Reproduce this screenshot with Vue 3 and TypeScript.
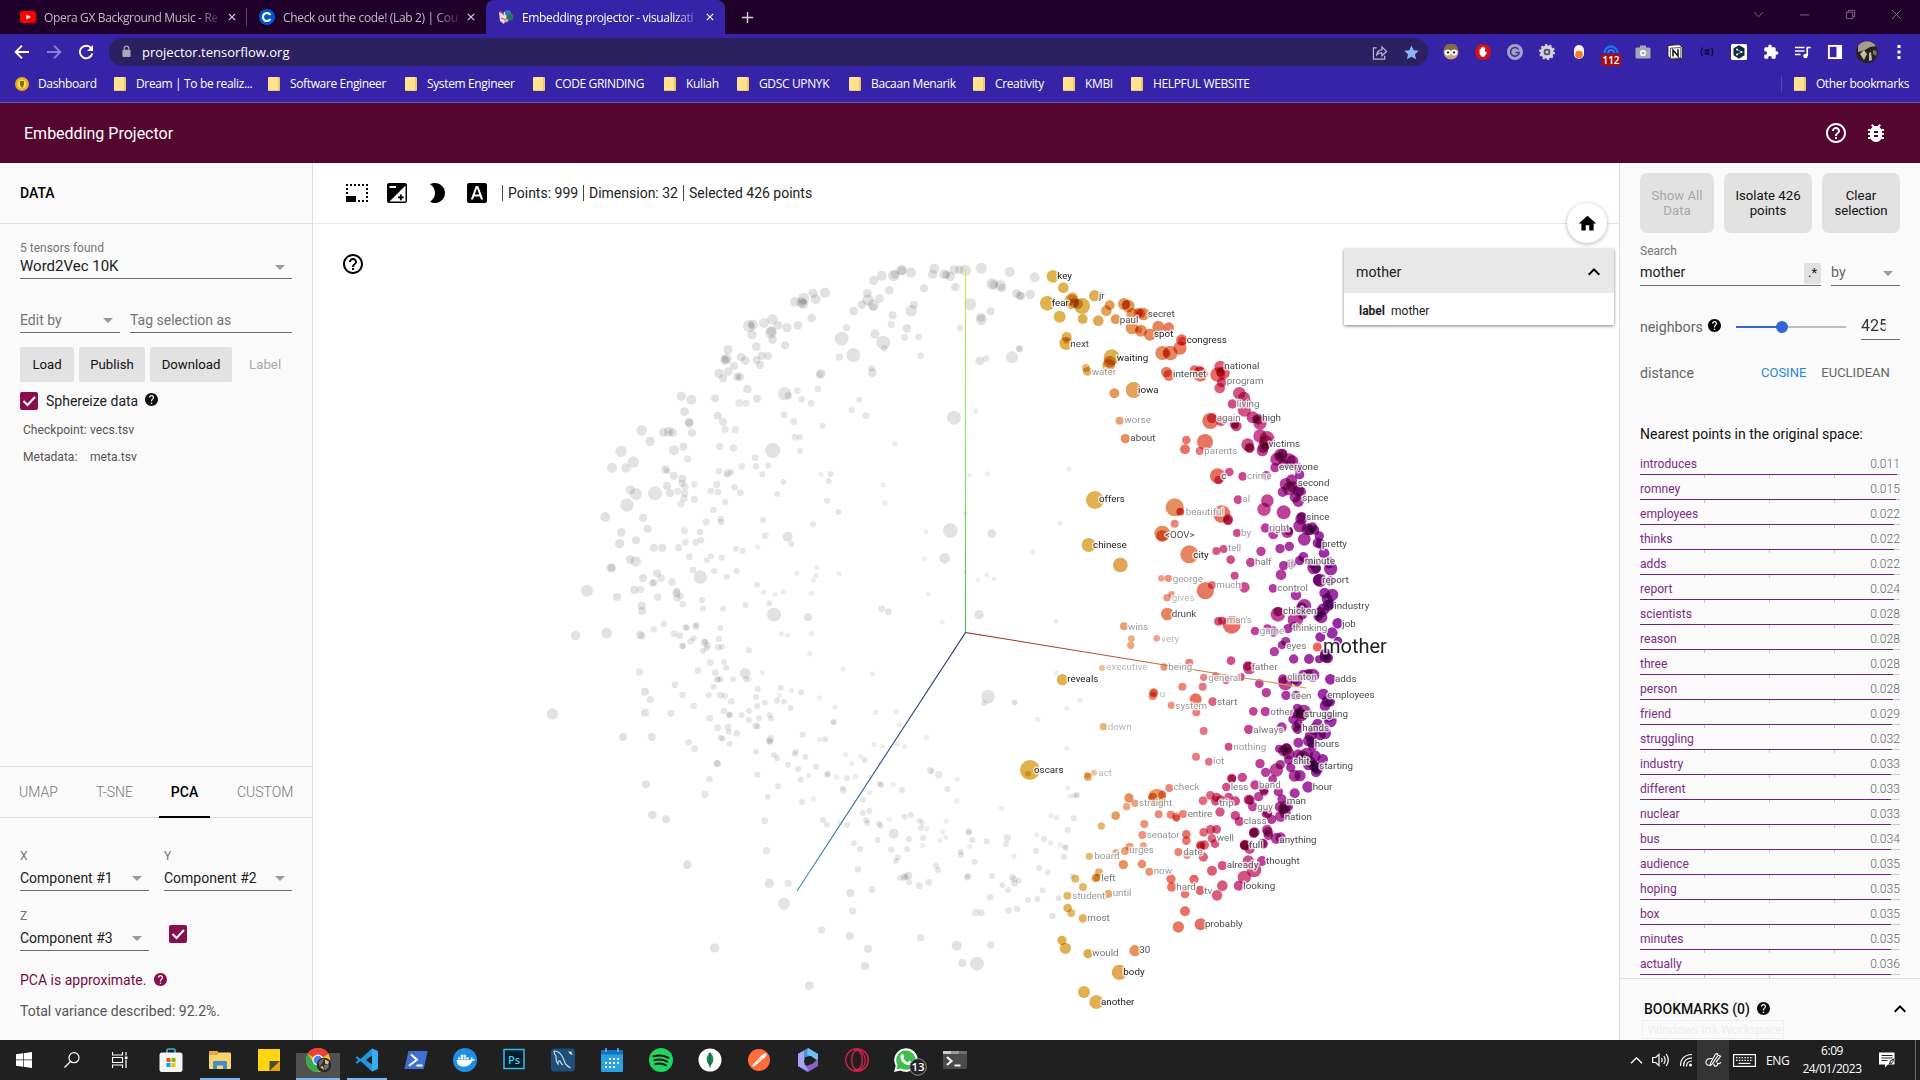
<script setup lang="ts">
interface Dot { x: number; y: number; r: number; fill: string }
interface Label { x: number; y: number; text: string; shade: string }
type RawLabel = [number, number, string, number]

const tabs = [
  { title: 'Opera GX Background Music - Re', icon: 'youtube', active: false },
  { title: 'Check out the code! (Lab 2) | Cou', icon: 'coursera', active: false },
  { title: 'Embedding projector - visualizati', icon: 'projector', active: true },
]

const bookmarks = [
  { name: 'Dream | To be realiz...', w: 154 },
  { name: 'Software Engineer', w: 137 },
  { name: 'System Engineer', w: 128 },
  { name: 'CODE GRINDING', w: 131 },
  { name: 'Kuliah', w: 73 },
  { name: 'GDSC UPNYK', w: 112 },
  { name: 'Bacaan Menarik', w: 124 },
  { name: 'Creativity', w: 90 },
  { name: 'KMBI', w: 68 },
  { name: 'HELPFUL WEBSITE', w: 130 },
]

const neighbors: [string, string][] = [
  ['introduces', '0.011'], ['romney', '0.015'], ['employees', '0.022'], ['thinks', '0.022'],
  ['adds', '0.022'], ['report', '0.024'], ['scientists', '0.028'], ['reason', '0.028'],
  ['three', '0.028'], ['person', '0.028'], ['friend', '0.029'], ['struggling', '0.032'],
  ['industry', '0.033'], ['different', '0.033'], ['nuclear', '0.033'], ['bus', '0.034'],
  ['audience', '0.035'], ['hoping', '0.035'], ['box', '0.035'], ['minutes', '0.035'],
  ['actually', '0.036'],
]

const fav: Record<string, string> = {
  youtube: '<rect x="0" y="2" width="16" height="12" rx="3" fill="#f00"/><path d="M6.4 5.4v5.2L11 8z" fill="#fff"/>',
  coursera: '<circle cx="8" cy="8" r="8" fill="#0056d2"/><path d="M11.4 6A4 4 0 1 0 11.4 10" fill="none" stroke="#fff" stroke-width="2.2"/>',
  projector: '<path d="M1 3l4 2 2-3 2 5-3 8-4-3z" fill="#e6e2ea"/><path d="M2 2l4 4M3 9l5 2" stroke="#c8566a" stroke-width="1.2"/><circle cx="10" cy="4" r="3" fill="#3d6fc4"/><circle cx="12" cy="8" r="3.4" fill="#1f7a55"/><circle cx="8.5" cy="11.5" r="2" fill="#c9a0b0"/>',
}

const extensions: string[] = [
  '<circle cx="8" cy="8" r="7.5" fill="#c9a27c"/><path d="M1 6a7 7 0 0 1 14 0z" fill="#86684c"/><circle cx="4.8" cy="8.4" r="3" fill="#fff"/><circle cx="11.2" cy="8.4" r="3" fill="#fff"/><circle cx="5" cy="8.4" r="1.2" fill="#333"/><circle cx="11" cy="8.4" r="1.2" fill="#333"/>',
  '<circle cx="8" cy="8" r="8" fill="#d2101c"/><path d="M4.6 7.5V5h1.3v3V3.4h1.4v4V2.8h1.4v4.6V3.6h1.4v5l1.2-1 .7.8-2.6 4.4H6.6L4.6 10z" fill="#fff"/>',
  '<circle cx="8" cy="8" r="8" fill="#a5a0cc"/><path d="M11.6 5.6A4.3 4.3 0 1 0 12.2 8.6H8.6" fill="none" stroke="#3d3390" stroke-width="1.5"/>',
  '<circle cx="8" cy="8" r="5" fill="none" stroke="#d4d4d6" stroke-width="3.4"/><circle cx="8" cy="8" r="7" fill="none" stroke="#d4d4d6" stroke-width="2" stroke-dasharray="2.2 2.2"/><circle cx="8" cy="8" r="3" fill="#55546a"/><circle cx="8" cy="8" r="1.500" fill="#d4d4d6"/>',
  '<rect x="3" y="1" width="10" height="14" rx="5" fill="#f3f1f4"/><circle cx="8" cy="10.5" r="3.8" fill="#ef7d2b"/>',
  '<path d="M1.5 9a6.5 6.5 0 0 1 13 0" fill="none" stroke="#1a73e8" stroke-width="2.4"/><path d="M5 9a3 3 0 0 1 6 0" fill="none" stroke="#3f8cff" stroke-width="1.6"/>',
  '<rect x="0.5" y="3.5" width="15" height="11" rx="1.5" fill="#a9a7ba"/><rect x="5" y="1.5" width="6" height="3" fill="#a9a7ba"/><circle cx="8" cy="9" r="3.1" fill="#fff"/><circle cx="8" cy="9" r="1.6" fill="#a9a7ba"/>',
  '<path d="M1 1.6L12 .6l3.4 2.6v11.2L4 15.6 1 12z" fill="#fff" stroke="#111" stroke-width=".8"/><path d="M3.4 4.2l10.500-.7v10.300l-10.500.7z" fill="#fff" stroke="#111" stroke-width=".7"/><path d="M6 12.500V6l5 6V5.300" fill="none" stroke="#111" stroke-width="1.500"/>',
  '<path d="M4 4Q2.6 4 2.6 6T1.4 8Q2.6 8 2.6 10T4 12M12 4q1.4 0 1.4 2T14.600 8Q13.400 8 13.400 10T12 12M5.500 6.500h5M5.500 9.500h5M7 5v6M9.200 5v6" fill="none" stroke="#140a45" stroke-width="1.3"/>',
  '<rect width="16" height="16" rx="1.500" fill="#fff"/><path d="M8 1.200l5.500 3.100v7L8 14.800l-5.500-3.500v-7z" fill="#0f2b46"/><path d="M6 5.500L10.500 8 6 10.500" fill="none" stroke="#b9c9d8" stroke-width=".8"/><circle cx="6" cy="5.500" r="1" fill="#fff"/><circle cx="10.500" cy="8" r="1" fill="#fff"/><circle cx="6" cy="10.500" r="1" fill="#fff"/>',
  '<path d="M13.700 7.300h-1V4.600c0-.7-.6-1.300-1.300-1.300H8.700v-1a1.700 1.700 0 0 0-3.400 0v1H2.600c-.7 0-1.300.6-1.300 1.300v2.600h1a1.800 1.800 0 0 1 0 3.600h-1v2.600c0 .7.6 1.300 1.300 1.300h2.600v-1a1.800 1.800 0 0 1 3.600 0v1h2.600c.7 0 1.300-.6 1.300-1.300v-2.700h1a1.700 1.700 0 0 0 0-3.400z" fill="#fff"/>',
  '<path d="M0 3.500h9.500M0 7h9.500M0 10.500h5.500" stroke="#fff" stroke-width="1.700"/><path d="M12.200 12V3.500h3.500" fill="none" stroke="#fff" stroke-width="1.700"/><circle cx="10.400" cy="12" r="2.200" fill="#fff"/>',
  '<rect x="1.900" y="1.900" width="12.200" height="12.200" fill="none" stroke="#fff" stroke-width="1.900"/><path d="M9.500 2h5v12h-5z" fill="#fff"/>',
]

const apps: { id: string; svg: string; open?: boolean; active?: boolean }[] = [
  { id: 'store', svg: '<path d="M8 6V2.500Q8 1 9.500 1h5Q16 1 16 2.500V6" fill="none" stroke="#3bb4e5" stroke-width="1.700"/><rect x=".5" y="4.500" width="23" height="19.500" rx="2.500" fill="#f4f4f4"/><path d="M7.500 10h4v4h-4z" fill="#f25022"/><path d="M12.500 10h4v4h-4z" fill="#7fba00"/><path d="M7.500 15h4v4h-4z" fill="#00a4ef"/><path d="M12.500 15h4v4h-4z" fill="#ffb900"/>' },
  { id: 'files', open: true, svg: '<path d="M1 3h8l2 3H1z" fill="#e8a33d"/><rect x="1" y="4.500" width="22" height="16.500" rx="1" fill="#fbd46d"/><path d="M1 3h9v4H1z" fill="#e9a945"/><path d="M5 21v-6.500q0-1.500 1.500-1.500h11q1.500 0 1.500 1.500V21h-4v-3.500H9V21z" fill="#3f8fcb"/>' },
  { id: 'notes', svg: '<path d="M1 1h22v12l-10 10H1z" fill="#ffd60f"/><path d="M12.500 13H23L12.500 23z" fill="#4d4a3a"/><path d="M23 13v10H12.500z" fill="#e8a400"/>' },
  { id: 'chrome', open: true, active: true, svg: '<circle cx="12" cy="12" r="12" fill="#fbc116"/><path d="M12 12L1.600 6A12 12 0 0 1 22.400 6z" fill="#ea4335"/><path d="M12 6h10.400A12 12 0 0 0 1.600 6z" fill="#ea4335"/><path d="M1.600 6A12 12 0 0 0 12 24l5-9-8 1z" fill="#34a853"/><circle cx="12" cy="12" r="5.500" fill="#fff"/><circle cx="12" cy="12" r="4.300" fill="#4285f4"/><circle cx="18" cy="17" r="7.300" fill="#2d2925"/><path d="M12.500 14q3-4 6-3l-2 4-3 4z" fill="#6f6557"/><path d="M19 11.500l4 2-1 3-3-1zM14 19l3-1 1 4z" fill="#cfc3ae"/><path d="M18 17l4.500-1v4l-4 2z" fill="#746b66"/>' },
  { id: 'code', open: true, svg: '<path d="M17 .5l6 2.700v17.600l-6 2.700L5.500 13 2 15.700.5 14.500 3.200 12 .5 9.500 2 8.300 5.500 11zM17.500 7L11 12l6.500 5z" fill="#1f97df" fill-rule="evenodd"/><path d="M17 .5l6 2.700v17.600l-6 2.700z" fill="#36aef0"/>' },
  { id: 'powershell', svg: '<path d="M4.500 3h19.200l-4 18H.4z" fill="#3f6fd1"/><path d="M7 6.500l6 5.300-8 6M12.500 17.500h6" fill="none" stroke="#fff" stroke-width="2"/>' },
  { id: 'docker', svg: '<circle cx="12" cy="12" r="12" fill="#1d8fe8"/><path d="M3.500 12h14q.2-2 1-3 1.400.8 1.500 2.200 1.200-.2 2 .3-.8 1.500-2.700 1.500Q17 18.700 10.500 18.700 4 18.700 3.500 12z" fill="#fff"/><path d="M5 9.300h2.300v2.200H5zM7.800 9.300h2.300v2.200H7.800zM10.600 9.300h2.300v2.200h-2.300zM13.400 9.300h2.300v2.200h-2.300zM7.800 6.700h2.300v2.200H7.800zM10.600 6.700h2.300v2.200h-2.300z" fill="#fff"/>' },
  { id: 'photoshop', svg: '<rect x="2" y="1.500" width="20" height="19" fill="#071c2a" stroke="#35bde8" stroke-width="1.500"/><text x="12" y="15.500" text-anchor="middle" font-family="Open Sans, sans-serif" font-size="11" font-weight="600" fill="#42c8f2">Ps</text>' },
  { id: 'mysql', svg: '<rect x="0" y=".5" width="24" height="23" rx="3" fill="#1f4e79"/><path d="M3 3q5 0 8 5 2 4 3.500 8 2 2 5 4M3 3q0 3 2 5 0 6 2 8 0-4 2-3 1 3 3 4" fill="none" stroke="#c8dcea" stroke-width="1.200"/><path d="M17 3l2 1 1-1 1 3 1 1-3-1z" fill="#fff"/>' },
  { id: 'calendar', svg: '<rect x="1" y="2" width="22" height="22" rx="1" fill="#29a1e2"/><path d="M1 2h22v4.500H1z" fill="#1272bd"/><path d="M6 0v4M18 0v4" stroke="#62c6f4" stroke-width="1.500"/><path d="M9 11h10M5 15h14M5 19h10" stroke="#fff" stroke-width="2" stroke-dasharray="2 2"/>' },
  { id: 'spotify', svg: '<circle cx="12" cy="12" r="12" fill="#1ed760"/><path d="M4.500 8.300q8-2.300 15 1.500M5.500 12.200q7-1.900 12.600 1.400M6.300 16q6-1.500 10.500 1.200" fill="none" stroke="#121212" stroke-width="2" stroke-linecap="round"/>' },
  { id: 'mongo', svg: '<circle cx="12" cy="12" r="11.500" fill="#fff"/><path d="M12 4q4.500 5 3 9.500-1 3-3 5-2-2-3-5Q7.500 9 12 4z" fill="#168b56"/><path d="M12 5v15" stroke="#0b5b3a" stroke-width=".8"/>' },
  { id: 'postman', svg: '<circle cx="12" cy="12" r="11" fill="#ff6c37"/><path d="M5.500 18l8-8.500M13 10q3-4.500 6-4-.5 3.500-5 5.500zM6 18.500l8-6.500" fill="#fff" stroke="#fff" stroke-width="1.100"/>' },
  { id: 'm365', svg: '<path d="M12 0l10 6v5l-7-3-6 2v7l5 5-3 2L2 18V6z" fill="#4d8ee0"/><path d="M12 0l10 6v7l-7-5-4-1z" fill="#6fc0f0"/><path d="M9 17l7-1 6-5v7l-10 6-10-6V6l3-2z" fill="#8a63c9"/><path d="M9 9l6-1 2 7-6 3-3-4z" fill="#202020"/><path d="M2 6l6-3.500V16l5 7L2 18z" fill="#a9a4ef"/>' },
  { id: 'opera', svg: '<circle cx="12" cy="12" r="11.300" fill="none" stroke="#d7214f" stroke-width="1.400"/><ellipse cx="12" cy="12" rx="5.300" ry="9.600" fill="none" stroke="#d7214f" stroke-width="1.400"/><path d="M9 2.500Q16 0 19 7t-1 12-9 2.500" fill="none" stroke="#d7214f" stroke-width="1.200"/>' },
  { id: 'whatsapp', svg: '<path d="M0 24l1.700-6.200A11.800 11.800 0 1 1 6.300 22.400z" fill="#fff"/><path d="M2.500 21.500l1-4.400a9.700 9.700 0 1 1 3.600 3.500z" fill="#41bd4e"/><path d="M7.300 6.500q1.700-1.500 2.700 1.500.6 1-.6 2.200 1.500 3 4.300 4.200l1.400-1.600q1 0 3 1.400.3 2.600-2.500 3Q8.500 17 6.300 9.500q0-2 1-3z" fill="#fff"/><circle cx="24" cy="19" r="8.300" fill="#262626" stroke="#8e8e8e" stroke-width="1"/><text x="24" y="23.200" text-anchor="middle" font-family="Open Sans, sans-serif" font-size="11.500" font-weight="600" fill="#fff">13</text>' },
  { id: 'terminal', svg: '<rect x="0" y="3" width="24" height="18" rx="1" fill="#4b4b4b"/><path d="M0 3h8v3H0z" fill="#cfcfcf"/><path d="M8 3h8v3H8z" fill="#9a9a9a"/><path d="M16 3h8v3h-8z" fill="#6d6d6d"/><path d="M4 9l4.500 4L4 17M11.500 17.500h6" fill="none" stroke="#f2f2f2" stroke-width="2.200"/>' },
]

const HELP_FILLED = 'M12 2C6.480 2 2 6.480 2 12s4.480 10 10 10 10-4.480 10-10S17.520 2 12 2zm1 17h-2v-2h2v2zm2.070-7.750l-.9.920C13.450 12.900 13 13.500 13 15h-2v-.5c0-1.100.45-2.100 1.170-2.830l1.240-1.260c.37-.36.59-.86.59-1.410 0-1.100-.9-2-2-2s-2 .9-2 2H8c0-2.210 1.790-4 4-4s4 1.790 4 4c0 .88-.36 1.680-.93 2.250z'
const HELP_OUTLINE = 'M11 18h2v-2h-2v2zm1-16C6.480 2 2 6.480 2 12s4.480 10 10 10 10-4.480 10-10S17.520 2 12 2zm0 18c-4.410 0-8-3.590-8-8s3.590-8 8-8 8 3.590 8 8-3.590 8-8 8zm0-14c-2.210 0-4 1.790-4 4h2c0-1.100.9-2 2-2s2 .9 2 2c0 2-3 1.750-3 5h2c0-2.250 3-2.500 3-5 0-2.210-1.790-4-4-4z'

// Point clouds are packed as "x y r" triplets in thirds of a pixel, relative to a tile origin.
const GREY_NW = `905 296 21 940 345 21 1030 308 21 898 351 11 920 263 11 941 213 13 966 194 13 982 160 13 984 180 17 1000 195 17 1019 176 13 999 201 11 1001 121 14 1025 107 15 1061 107 17 1065 103 13 1085 90 16 1086 92 13 1113 98 15 1048 151 13 1058 226 12 1054 253 11 1005 282 14 1033 325 10 1101 265 13 1094 292 11 1136 291 10 1142 347 10 1114 212 17 1122 194 12 1152 145 12 1183 86 15 1178 103 14 1213 103 15 1219 104 12 1231 109 14 1242 89 14 1258 89 13 1276 91 17 1246 141 13 1324 85 17 1409 96 15 1290 193 18 1357 132 18 1361 134 13 1381 136 16 1386 144 13 1429 160 13 1439 167 13 1352 214 12 1323 232 14 1324 240 16 1260 264 10 1416 352 18 1439 326 11 1319 363 13 1338 356 10
765 185 15 791 175 17 785 187 16 790 192 15 788 186 10 819 160 14 827 178 15 855 158 15 815 234 13 774 256 13 741 263 14 714 256 13 697 238 16 672 249 15 694 273 15 693 278 17 698 298 13 627 258 18 639 254 15 634 256 9 636 284 14 735 316 12 649 320 13 564 329 14 555 361 15 560 356 15 555 359 10 603 351 13 616 362 13 665 347 12 684 348 12 650 360 12 660 375 12 582 378 12 565 395 13 537 400 14 549 415 12 592 410 12 600 411 13 596 411 7 843 401 14 839 404 11 995 385 10 997 398 13 424 469 14 454 479 15 525 475 12 622 447 13 651 476 12 597 489 11 618 490 11 734 461 20 745 467 11 772 452 10 785 478 10 814 490 10 834 447 10 958 479 9 935 510 9 978 527 10 1242 533 21 1307 513 8
434 515 13 447 546 13 448 550 13 533 527 12 549 546 12 555 568 11 586 569 11 732 525 10 761 545 10 848 557 9 456 578 12 305 571 16 330 604 14 370 577 13 386 575 15 398 578 13 390 577 7 765 592 10 780 592 9 780 632 9 1064 611 8 243 634 17 280 666 17 258 684 14 216 683 15 402 631 15 430 620 12 443 657 11 539 619 11 580 624 11 698 631 23 645 653 10 605 680 10 648 679 10 685 677 9 667 703 9 537 694 10 563 700 12 574 697 9 560 703 8 376 688 12 381 693 10 401 707 12 427 716 12 426 730 11 435 740 11 463 733 10 530 733 11 512 753 10 534 756 10 584 742 10 601 758 10 730 726 9 711 762 9 843 703 8 872 702 9 866 723 9 1030 734 8 1289 705 7 1342 702 8
271 750 14 288 762 18 345 760 21 261 795 20 381 738 12 390 759 12 413 754 11 434 760 11 432 775 11 463 778 11 423 792 11 556 786 9 520 810 10 861 782 9 1035 789 8 895 816 9 1276 820 7 196 831 15 309 833 12 498 846 11 542 837 10 543 846 10 668 840 9 819 853 9 323 866 12 433 872 11 480 876 10 676 887 10 743 890 15 754 912 9 1158 875 7 1231 872 22 1355 881 13 244 877 13 239 911 14 288 901 12 341 923 12 367 923 12 416 923 11 436 907 10 467 907 10 483 901 10 653 921 8 588 926 9 608 932 9 448 950 10 513 949 9 500 961 9 545 953 9 270 959 13 287 964 16 214 984 14 214 983 11 459 990 10 481 1011 20 522 993 9 560 1010 9 590 993 9 831 982 8 770 1000 8 828 1006 8 820 1020 8 897 1001 8 1153 956 7 1214 955 16 1276 996 6 1314 1021 7 1340 1005 7 1363 1017 7
309 1014 12 351 1000 12 364 1014 11 337 1030 11 342 1027 11 396 1026 11 283 1050 12 302 1048 11 141 1052 18 231 1071 12 353 1071 11 409 1060 12 411 1053 10 411 1074 11 422 1069 10 428 1093 10 486 1080 9 651 1034 9 670 1057 8 705 1063 8 731 1056 8 814 1060 8 1165 1063 7 688 1090 9 616 1095 9 305 1097 12 306 1113 12 489 1106 9 549 1106 9 702 1124 21 804 1131 12 1025 1106 10 1045 1115 10 1207 1147 7 1317 1124 14 372 1152 10 341 1168 10 107 1187 14 200 1179 16 300 1184 12 306 1188 11 437 1162 10 440 1163 9 467 1160 10 469 1155 9 541 1165 9 403 1181 10 420 1187 10 461 1195 9 537 1197 10 724 1181 8 743 1186 8 814 1181 8`
const GREY_SW = `427 18 10 429 18 9 452 4 10 493 8 11 503 16 10 495 5 9 500 25 9 489 32 9 535 22 10 546 20 9 627 31 9 809 41 8 909 86 8 998 102 8 299 96 11 474 92 10 511 68 10 552 66 9 559 83 9 667 99 8 615 100 16 618 118 9 628 118 8 405 134 10 428 165 10 315 155 12 331 179 11 315 218 12 393 220 11 461 198 10 526 98 10 532 119 10 542 118 9 534 117 8 579 118 9 521 140 9 506 166 9 541 166 10 555 168 9 574 184 10 653 147 9 648 171 9 722 143 9 718 167 8 754 152 8 783 157 9 839 174 8 711 182 9 732 185 9 674 188 9 652 198 9 752 203 9 885 202 8 881 247 9 880 246 8 1007 218 8 1069 215 8 1078 254 7 1175 127 7 1344 170 21 1333 190 9 1424 188 8 509 235 10 552 213 10 568 225 10 569 224 9 605 225 9 627 213 9 627 240 9 657 235 9 689 225 9 693 235 9 37 222 17 249 291 12 335 291 12 446 307 10 464 326 10 533 263 10 564 261 10 566 275 9 591 280 10 647 257 10 653 260 9 542 293 9 548 296 9 569 311 9 692 296 11 688 302 10 690 306 9 788 284 9 839 299 8 855 298 9 1002 314 8 1027 319 7 1072 312 8 1094 320 8 1160 292 8
648 335 9 702 345 9 711 355 9 768 335 9 764 342 9 796 350 9 744 374 9 775 387 9 828 380 9 806 406 8 782 419 9 532 371 11 531 370 10 652 404 9 508 418 10 495 463 11 318 433 12 337 525 13 378 538 12 714 439 9 683 470 9 861 404 9 864 401 9 889 411 8 921 415 9 946 410 8 935 371 8 917 344 8 962 349 8 974 360 9 908 444 8 910 451 10 1020 431 9 1023 435 9 1060 434 8 1086 450 9 990 458 8 968 479 9 990 413 8 1171 392 10 1176 393 8 1196 404 11 1252 418 8 1222 447 9 1250 483 8 1384 505 8 786 486 9 820 476 8 674 542 10 849 540 9 861 554 9 900 548 8 921 554 9 968 519 9 988 513 9 979 541 9 982 549 9 1017 551 9 1021 557 9 1047 538 8 1094 530 9 1113 525 9 1139 542 9 1148 548 8 1143 563 9 1160 566 8 1219 544 8 1061 581 15 1013 600 9 942 610 9 960 627 9 1053 629 9 1107 597 9 1149 594 9 1102 628 9 1147 616 8 1200 601 8 1217 592 8 1208 576 8 1286 574 9 1287 578 9 1297 600 9 1290 619 8 1340 604 9 1402 594 11 1398 613 9 1068 662 9 1074 652 9 1262 635 9 1263 645 9 1304 665 9 1422 649 8 1188 677 9 1194 690 9 953 688 10 680 632 11 442 674 13 688 730 14 745 730 11 732 791 18 931 759 12 996 749 10 1081 713 9 1093 711 11 1096 711 9 1105 707 12 1107 727 9 1138 737 10 1166 727 10 1282 712 10 1284 708 9 1356 708 9 1417 711 10 1422 718 10 1424 730 10 1436 722 9 1387 735 9 1404 750 9 1350 772 10 1307 817 11 1324 818 10 1406 811 10 1431 807 10 938 813 11 845 870 11 929 888 12 984 926 12 975 978 12 808 1037 13 524 924 14 1142 893 11 1250 917 15 1352 915 11 1267 969 12 1311 971 21`
const GREY_NE = '104 112 15 91 163 14 64 168 12 58 326 9 207 687 8'
const GREY_E = '180 70 8 99 156 8 168 364 7 169 520 8 44 607 8 240 601 8 200 625 8 113 658 8 200 745 8'
const GREY_SE = '203 114 8 210 139 8 221 138 8 230 134 9 231 136 8 153 197 8 170 203 8 221 205 9 203 240 9 110 254 8 132 267 9 152 279 8 182 285 8 197 293 9 196 291 8 192 321 9 108 303 9 118 354 9 143 367 9 217 379 9 84 451 9 112 447 9 128 421 9 176 444 9 157 498 10'

const HOT_NE = `159 109 19 190 143 16 142 190 22 208 187 11 218 173 16 214 185 22 223 189 14 234 192 15 246 198 24 179 230 18 248 237 15 295 242 16 284 167 17 329 196 15 319 212 16 347 238 15 372 192 18 385 198 19 378 194 13 397 222 18 415 218 14 430 222 19 422 220 14 396 264 19 423 272 18 450 284 18 416 270 10 475 260 18 506 263 16 200 291 15 198 310 20 199 303 9 545 300 17 547 303 13 540 324 20 487 339 21 511 339 22 500 340 12 335 352 24 329 365 18 326 376 19 258 384 12 262 394 13 343 460 15 401 450 24 359 542 12 376 596 14 499 396 16 507 406 17 583 390 14 601 403 22 599 392 14 661 380 18 653 404 22 670 400 19 661 396 14 659 444 16 665 428 14 718 460 19 732 473 18 697 492 14 733 510 20 742 488 13 631 543 24 636 535 15 663 544 15 703 552 14 709 558 16 706 555 11 758 532 18 776 538 16 780 549 20 768 538 12 559 600 13 555 628 15 615 606 24 599 633 12 780 588 20 801 595 22 797 606 20 790 622 17 787 632 17 795 620 12 743 614 19 749 625 15 748 623 13 653 708 23 656 720 13 688 696 13 728 709 13 799 707 14 830 658 19 842 646 20 848 640 14 839 647 12 867 660 20 877 664 18 850 672 15 825 683 14 895 684 14 875 720 17 857 732 18 868 746 20 878 740 17 895 752 17 848 756 15 899 704 14 903 755 15 885 772 16 895 784 17 714 779 13 802 782 19 792 808 20 851 817 21 285 780 27 524 802 27 541 815 12 665 822 26 684 838 15 905 830 14`
const HOT_E = `266 135 21 361 195 22 487 101 24 486 107 17 524 71 12 568 163 27 541 35 11 684 62 14 711 99 12 692 179 13 649 153 12 671 147 12 704 227 12 752 187 14 783 154 14 733 262 16 636 255 12 616 272 26 484 235 10 505 235 11 501 293 11 515 283 10 502 342 19 372 379 12 394 416 10 392 436 11 470 415 10 655 364 13 666 362 12 695 374 27 765 393 13 796 84 14 820 103 15 862 96 18 866 93 13 904 56 18 899 78 19 923 88 18 937 82 15 913 118 19 944 90 14 929 90 16 958 108 14 953 129 15 962 132 15 840 146 14 868 139 14 972 160 16 910 171 15 899 182 14 851 197 14 873 192 14 843 224 16 987 188 17 992 206 20 942 203 20 948 205 15 936 190 15 819 265 13 888 285 16 960 241 20 955 240 17 991 243 14 974 279 16 997 284 18 981 296 16 985 316 17 992 312 15 970 328 18 960 338 17 964 352 18 954 350 13 913 318 21 905 325 18 834 343 22 834 335 14 886 360 23 907 345 14 864 386 14 884 378 13 1013 370 16 996 399 17 961 411 15 1014 423 13 820 397 13 802 385 12 820 393 14 857 425 14 846 435 13 823 455 14 977 462 17 983 474 16 977 470 18 881 477 14 927 477 15 957 478 12 568 488 12 492 501 11 306 504 9 187 539 17 693 482 13 748 504 19 743 498 14 778 551 13 611 532 11 678 540 12 647 528 11 722 531 12 608 560 12 547 560 12 461 579 14 458 589 12 461 578 10 514 616 11 587 598 18 589 637 12 638 605 13 611 693 12 849 538 15 856 550 21 885 537 16 910 525 16 925 521 14 938 526 20 892 545 14 991 538 16 799 578 14 858 586 14 888 586 14 970 583 17 982 604 17 991 606 14 975 617 16 760 634 13 796 635 14 892 625 14 911 636 22 905 646 18 900 640 16 884 640 14 880 658 15 986 650 16 991 663 19 310 680 11 746 688 14 845 682 15 888 681 14 893 689 13 895 672 14 953 672 16 943 688 18 975 700 18 960 704 17 932 708 18 926 722 17 935 727 16 895 728 15 686 740 12 837 746 12 859 748 18 860 744 14 938 739 14`
const HOT_SE = `90 60 30 84 71 9 282 68 9 264 81 12 262 76 10 588 20 12 627 35 12 508 114 12 387 144 14 380 170 11 405 160 11 304 228 11 347 197 13 476 193 12 471 143 27 458 141 13 487 134 12 512 194 12 528 200 12 549 192 12 530 205 11 433 222 12 427 255 12 430 288 11 389 290 12 375 303 12 268 319 11 348 308 11 370 344 14 426 342 13 297 367 12 287 384 13 291 383 11 226 386 12 249 411 12 202 437 12 325 432 12 448 365 12 203 474 13 214 489 12 249 505 13 186 571 14 196 595 17 264 611 14 405 602 17 358 667 23 252 726 18 289 756 21 555 484 15 535 531 17 602 523 18 513 387 14 515 411 14 555 432 13 582 388 14 600 421 14 559 253 13 559 272 13 561 316 11 535 306 12 602 286 14 613 285 14 602 290 13 610 321 14 611 247 13 632 239 14 650 238 13 636 265 13 645 281 13 636 362 15 667 347 14 609 152 13 631 136 13 650 142 14 647 153 14 662 148 12 686 141 13 706 153 14 660 186 14 695 85 14 696 86 12 727 82 14 679 111 13 765 105 14 706 197 14 718 214 14 746 149 15 750 150 14 776 140 14 758 170 14 780 41 14 797 67 14 791 118 14 793 124 13 818 88 13 829 60 20 841 44 14 866 30 14 865 10 18 850 2 16 872 52 14 884 77 18 900 77 17 895 15 17 908 22 20 920 12 19 930 35 17 925 45 16 945 18 17 952 56 17 945 50 16 941 46 16 948 67 15 968 28 16 924 111 17 884 130 15 835 125 14 846 147 14 839 170 15 855 170 17 850 177 16 866 170 13 842 199 17 855 188 17 815 208 14 800 191 15 803 189 14 761 247 14 761 250 14 764 247 15 801 239 15 804 246 15 805 256 14 829 265 17 842 263 16 733 285 14 736 285 16 735 287 14 749 297 15 790 282 14 787 280 14 745 333 17 786 333 15 762 360 22 733 382 20 716 407 15 667 407 16 651 436 16`

function unpack(raw: string, ox: number, oy: number): [number, number, number][] {
  const n = raw.trim().split(/\s+/).map(Number)
  const out: [number, number, number][] = []
  for (let i = 0; i + 2 < n.length; i += 3) out.push([ox + n[i] / 3, oy + n[i + 1] / 3, n[i + 2] / 3])
  return out
}

const ramp: [number, number[]][] = [
  [1040, [224, 178, 76]], [1080, [224, 175, 84]], [1105, [228, 158, 88]], [1130, [230, 142, 94]],
  [1160, [233, 124, 98]], [1190, [232, 108, 100]], [1212, [218, 92, 122]], [1232, [206, 78, 140]],
  [1258, [190, 66, 154]], [1290, [168, 54, 162]], [1340, [146, 38, 166]],
]
function heat(x: number, r: number): string {
  const v = Math.max(1040, Math.min(1339, x - Math.max(0, r - 4.6) * 10))
  let i = 0
  while (v >= ramp[i + 1][0]) i++
  const t = (v - ramp[i][0]) / (ramp[i + 1][0] - ramp[i][0])
  const c = ramp[i][1].map((a, k) => {
    const base = a + (ramp[i + 1][1][k] - a) * t
    const lift = v < 1215 ? Math.max(0, 4.6 - r) * 22 : 0
    return Math.round(base + ((255 - base) * lift) / 100)
  })
  return `rgb(${c.join(',')})`
}

const greys: Dot[] = [
  ...unpack(GREY_NW, 540, 240), ...unpack(GREY_SW, 540, 640), ...unpack(GREY_NE, 1000, 240),
  ...unpack(GREY_E, 1000, 500), ...unpack(GREY_SE, 1000, 750),
].map(([x, y, r]) => ({ x, y, r, fill: r > 3.8 ? '#e2e2e2' : r > 2.9 ? '#e6e6e6' : '#ededed' }))

const hots: Dot[] = [
  ...unpack(HOT_NE, 1000, 240), ...unpack(HOT_E, 1000, 500), ...unpack(HOT_SE, 1000, 750),
].map(([x, y, r]) => ({ x, y, r, fill: heat(x, r) }))

const shades = ['#1c1c1c', '#4a4a4a', '#777', '#9a9a9a', '#b8b8b8']
const labelsNE: RawLabel[] = [
  [172, 108, 'key', 0], [155, 189, 'fear', 0], [297, 167, 'jr', 1], [443, 222, 'secret', 1], [359, 238, 'paul', 1],
  [462, 282, 'spot', 0], [560, 298, 'congress', 0], [211, 312, 'next', 1], [350, 352, 'waiting', 0], [275, 396, 'water', 3],
  [519, 402, 'internet', 1], [673, 378, 'national', 1], [680, 422, 'program', 2], [414, 450, 'iowa', 0], [710, 492, 'living', 2],
  [373, 540, 'worse', 3], [650, 534, 'again', 2], [787, 534, 'high', 1], [391, 594, 'about', 1], [613, 633, 'parents', 3],
  [806, 612, 'victims', 1], [837, 681, 'everyone', 1], [664, 706, 'c', 1], [741, 708, 'crime', 3], [893, 729, 'second', 1],
  [907, 772, 'space', 1], [727, 777, 'al', 3], [297, 777, 'offers', 0], [557, 816, 'beautiful', 3], [919, 831, 'since', 1],
]
const labelsE: RawLabel[] = [
  [495, 105, '<OOV>', 1], [808, 84, 'right', 2], [723, 99, 'by', 3], [279, 135, 'chinese', 0], [966, 130, 'pretty', 1],
  [580, 163, 'city', 0], [684, 144, 'tell', 3], [765, 186, 'half', 2], [914, 181, 'minute', 1], [864, 190, 'it', 3], [518, 235, 'george', 3],
  [649, 255, 'much', 3], [967, 240, 'report', 1], [832, 264, 'control', 2], [515, 292, 'gives', 4], [1003, 316, 'industry', 1],
  [515, 342, 'drunk', 1], [849, 333, 'chicken', 1], [384, 379, 'wins', 3], [680, 360, "man's", 3], [878, 384, 'thinking', 2],
  [779, 391, 'game', 3], [1027, 372, 'job', 1], [484, 415, 'very', 4], [859, 436, 'eyes', 2], [319, 501, 'executive', 4],
  [505, 501, 'being', 3], [755, 501, 'father', 2], [202, 537, 'reveals', 0], [625, 532, 'general', 3], [862, 531, 'clinton', 2],
  [1005, 537, 'adds', 1], [479, 580, 'u', 4], [872, 586, 'seen', 2], [982, 585, 'employees', 1], [526, 616, 'system', 3],
  [651, 604, 'start', 2], [811, 634, 'other', 2], [913, 640, 'struggling', 1], [323, 679, 'down', 4], [760, 688, 'always', 2],
  [907, 684, 'hands', 1], [700, 739, 'nothing', 3], [944, 732, 'hours', 1],
]
const labelsSE: RawLabel[] = [
  [639, 33, 'lot', 3], [880, 33, 'shit', 1], [958, 48, 'starting', 1], [102, 60, 'oscars', 0], [295, 69, 'act', 4],
  [521, 111, 'check', 3], [692, 111, 'less', 2], [777, 105, 'band', 2], [938, 111, 'hour', 1], [417, 159, 'straight', 3],
  [658, 157, 'trip', 2], [860, 151, 'man', 1], [772, 170, 'guy', 2], [563, 192, 'entire', 2], [854, 199, 'nation', 1],
  [731, 213, 'class', 2], [440, 255, 'senator', 3], [650, 264, 'well', 2], [838, 268, 'anything', 1], [747, 283, 'full', 1],
  [388, 300, 'urges', 3], [550, 306, 'date', 2], [283, 318, 'board', 3], [798, 333, 'thought', 1], [680, 345, 'already', 1],
  [461, 363, 'now', 3], [304, 384, 'left', 2], [529, 411, 'hard', 2], [613, 421, 'tv', 2], [730, 406, 'looking', 1],
  [217, 436, 'student', 3], [338, 429, 'until', 3], [262, 504, 'most', 2], [615, 522, 'probably', 1], [277, 608, 'would', 2],
  [418, 600, '30', 1], [370, 666, 'body', 0], [303, 756, 'another', 0],
]
function place(rows: RawLabel[], ox: number, oy: number): Label[] {
  return rows.map(([x, y, text, s]) => ({ x: ox + x / 3, y: oy + y / 3 + 3.2, text, shade: shades[s] }))
}
const labels: Label[] = [...place(labelsNE, 1000, 240), ...place(labelsE, 1000, 500), ...place(labelsSE, 1000, 750)]
</script>

<template>
  <div class="screen">
    <div class="tabstrip">
      <div v-for="t in tabs" :key="t.icon" class="tab" :class="{ active: t.active }">
        <svg class="fav" viewBox="0 0 16 16" v-html="fav[t.icon]"></svg>
        <span class="tab-title">{{ t.title }}</span>
        <svg class="tab-x" viewBox="0 0 10 10"><path d="M1 1l8 8M9 1L1 9" /></svg>
      </div>
      <svg class="plus" viewBox="0 0 14 14"><path d="M7 1v12M1 7h12" /></svg>
      <div class="win">
        <svg viewBox="0 0 12 12"><path d="M1 3.500l5 5 5-5" /></svg>
        <svg viewBox="0 0 12 12"><path d="M1 6.500h10" /></svg>
        <svg viewBox="0 0 12 12"><path d="M1.500 3.500h7v7h-7zM3.500 3.500v-2h7v7h-2" /></svg>
        <svg viewBox="0 0 12 12"><path d="M1 1l10 10M11 1L1 11" /></svg>
      </div>
    </div>

    <div class="toolbar">
      <svg class="nav" viewBox="0 0 16 16"><path d="M15 8H2M8 1.700L1.700 8 8 14.300" /></svg>
      <svg class="nav dim" viewBox="0 0 16 16"><path d="M1 8h13M8 1.700L14.300 8 8 14.300" /></svg>
      <svg class="nav" viewBox="0 0 16 16"><path d="M13.300 4.300A6.300 6.300 0 1 0 14.300 9.500" /><path d="M15 1v6H9z" class="solid" /></svg>
      <div class="omnibox">
        <svg class="lock" viewBox="0 0 10 14"><rect x="0.500" y="5" width="9" height="8" rx="1" fill="#a9a6bd" /><path d="M2.500 5V3.500a2.500 2.500 0 0 1 5 0V5" fill="none" stroke="#a9a6bd" stroke-width="1.400" /></svg>
        <span>projector.tensorflow.org</span>
        <svg class="share" viewBox="0 0 16 16"><path d="M4.500 3H1v12h12v-3.500M4.500 10.500Q5 5.500 10 5.200V2l5 5-5 4.500V8.500Q6.500 8.200 4.500 10.500z" /></svg>
        <svg class="star" viewBox="0 0 16 16"><path d="M8 .5l2.300 5 5.400.6-4 3.700 1.100 5.400L8 12.500l-4.800 2.700 1.100-5.400-4-3.700 5.400-.6z" /></svg>
      </div>
      <div class="exts">
        <div v-for="(e, i) in extensions" :key="i" class="ext">
          <svg viewBox="0 0 16 16" v-html="e"></svg>
          <b v-if="i === 5" class="badge">112</b>
        </div>
        <div class="ext"><svg class="avatar" viewBox="0 0 22 22"><circle cx="11" cy="11" r="11" fill="#26221f" /><path d="M2 5a11 11 0 0 1 18 0l-6 1-5 3-7 2z" fill="#a59d90" /><path d="M4 13l4-4 3 4-3 6zM13 12l2-1 1 8-3 1z" fill="#c9bba2" /><path d="M17 9l4 1-1 5-3-2z" fill="#77726e" /></svg></div>
        <div class="ext"><svg viewBox="0 0 16 16"><path d="M6.500 1h3v3h-3zM6.500 6.500h3v3h-3zM6.500 12h3v3h-3z" fill="#fff" /></svg></div>
      </div>
    </div>

    <div class="bookmarks">
      <div class="bm first"><svg class="crest" viewBox="0 0 14 14"><circle cx="7" cy="7" r="7" fill="#e0ae1e" /><circle cx="7" cy="7" r="4.500" fill="#f6d956" /><path d="M5 4h4v4L7 11 5 8z" fill="#8a6a12" /></svg>Dashboard</div>
      <div v-for="b in bookmarks" :key="b.name" class="bm" :style="{ width: b.w + 'px' }"><i class="folder"></i>{{ b.name }}</div>
      <div class="bm other"><i class="folder"></i>Other bookmarks</div>
    </div>

    <header class="appbar">
      <h1>Embedding Projector</h1>
      <svg viewBox="0 0 24 24"><path :d="HELP_OUTLINE" /></svg>
      <svg viewBox="0 0 24 24"><path d="M20 8h-2.810c-.45-.78-1.070-1.450-1.820-1.960L17 4.410 15.590 3l-2.170 2.170C12.960 5.060 12.490 5 12 5s-.96.060-1.410.170L8.410 3 7 4.410l1.620 1.630C7.880 6.550 7.260 7.220 6.810 8H4v2h2.090c-.05.33-.09.66-.09 1v1H4v2h2v1c0 .34.040.67.090 1H4v2h2.810c1.040 1.790 2.970 3 5.190 3s4.150-1.210 5.190-3H20v-2h-2.090c.05-.33.09-.66.09-1v-1h2v-2h-2v-1c0-.34-.04-.67-.09-1H20V8zm-6 8h-4v-2h4v2zm0-4h-4v-2h4v2z" /></svg>
    </header>

    <main class="body">
      <aside class="left">
        <h2 class="data-head">DATA</h2>
        <div class="data">
          <div class="hint">5 tensors found</div>
          <div class="field wide">Word2Vec 10K<i class="arrow"></i></div>
          <div class="pair">
            <div class="field edit">Edit by<i class="arrow"></i></div>
            <div class="field tag">Tag selection as</div>
          </div>
          <div class="buttons"><button>Load</button><button>Publish</button><button>Download</button><span>Label</span></div>
          <div class="sphere">
            <i class="check"><svg viewBox="0 0 18 18"><path d="M3.500 9l4 4 7.500-8" /></svg></i>
            <span>Sphereize data</span>
            <svg class="q" viewBox="2 2 20 20"><path :d="HELP_FILLED" /></svg>
          </div>
          <div class="file"><span>Checkpoint:</span>vecs.tsv</div>
          <div class="file"><span>Metadata:</span>meta.tsv</div>
        </div>
        <nav class="methods"><span class="m1">UMAP</span><span class="m2">T-SNE</span><span class="m3">PCA</span><span class="m4">CUSTOM</span></nav>
        <div class="pca">
          <div class="comp"><small>X</small><div class="field">Component #1<i class="arrow"></i></div></div>
          <div class="comp y"><small>Y</small><div class="field">Component #2<i class="arrow"></i></div></div>
          <div class="comp"><small>Z</small><div class="field">Component #3<i class="arrow"></i></div></div>
          <i class="check"><svg viewBox="0 0 18 18"><path d="M3.500 9l4 4 7.500-8" /></svg></i>
        </div>
        <div class="approx">PCA is approximate.<svg class="q" viewBox="2 2 20 20"><path :d="HELP_FILLED" /></svg></div>
        <div class="variance">Total variance described: 92.2%.</div>
      </aside>

      <section class="stage">
        <div class="stage-bar">
          <svg viewBox="0 0 24 24"><path d="M1 3h2v2H1zM5 3h2v2H5zM9 3h2v2H9zM13 3h2v2h-2zM17 3h2v2h-2zM21 3h2v2h-2zM1 7h2v2H1zM1 11h2v2H1zM21 7h2v2h-2zM21 11h2v2h-2zM21 15h2v2h-2zM21 19h2v2h-2zM17 19h2v2h-2zM13 19h2v2h-2zM1 15h10v6H1z" /></svg>
          <svg viewBox="0 0 24 24"><path d="M20 2H4c-1.100 0-2 .9-2 2v16c0 1.100.9 2 2 2h16c1.100 0 2-.9 2-2V4c0-1.100-.9-2-2-2zM4.500 5H11v2H4.500zM20.500 20.500H4.500l16-16zM15 13.500v2h-2v1.800h2v2h1.800v-2h2v-1.800h-2v-2z" fill-rule="evenodd" /></svg>
          <svg viewBox="0 0 24 24"><path d="M10 2c-1.820 0-3.530.5-5 1.350C7.990 5.080 10 8.300 10 12s-2.010 6.920-5 8.650C6.470 21.500 8.180 22 10 22c5.520 0 10-4.480 10-10S15.520 2 10 2z" /></svg>
          <svg viewBox="0 0 24 24"><path d="M4 2h16a2 2 0 0 1 2 2v16a2 2 0 0 1-2 2H4a2 2 0 0 1-2-2V4a2 2 0 0 1 2-2zM10.800 5L5.800 18.500h2.300l1-3h5.800l1 3h2.300L13.200 5zM9.800 13.500L12 7.300l2.200 6.200z" fill-rule="evenodd" /></svg>
          <span class="stat s1">Points: 999</span><span class="stat s2">Dimension: 32</span><span class="stat s3">Selected 426 points</span>
        </div>
        <div class="plot">
          <svg class="cloud" viewBox="313 224 1306 816" width="1306" height="816">
            <defs>
              <linearGradient id="ay" gradientUnits="userSpaceOnUse" x1="0" y1="269" x2="0" y2="632"><stop offset="0" stop-color="#c9ec4a" /><stop offset="0.500" stop-color="#8fe070" /><stop offset="1" stop-color="#4dbb62" /></linearGradient>
              <linearGradient id="ax" gradientUnits="userSpaceOnUse" x1="965" y1="0" x2="1306" y2="0"><stop offset="0" stop-color="#8d2020" /><stop offset="0.500" stop-color="#c05a35" /><stop offset="1" stop-color="#dfa83c" /></linearGradient>
              <linearGradient id="az" gradientUnits="userSpaceOnUse" x1="965" y1="632" x2="797" y2="891"><stop offset="0" stop-color="#20205c" /><stop offset="0.500" stop-color="#2a5290" /><stop offset="1" stop-color="#2897ac" /></linearGradient>
            </defs>
            <circle v-for="(d, i) in greys" :key="'g' + i" class="dot" :cx="d.x" :cy="d.y" :r="d.r" :fill="d.fill" />
            <circle v-for="(d, i) in hots" :key="'h' + i" class="dot" :cx="d.x" :cy="d.y" :r="d.r" :fill="d.fill" />
            <circle cx="1317.300" cy="647" r="4.500" fill="#f2605a" />
            <path d="M965.500 269V632" stroke="url(#ay)" stroke-width="1.200" fill="none" />
            <path d="M965.500 632.500L1306 688" stroke="url(#ax)" stroke-width="1.100" fill="none" />
            <path d="M965.500 632.500L797 891" stroke="url(#az)" stroke-width="1.100" fill="none" />
            <text v-for="(l, i) in labels" :key="'l' + i" class="lbl" :x="l.x" :y="l.y" :fill="l.shade">{{ l.text }}</text>
            <text class="lbl big" x="1323" y="652.500" fill="#222">mother</text>
          </svg>
          <svg class="plot-help" viewBox="0 0 24 24"><path :d="HELP_OUTLINE" /></svg>
          <div class="home"><svg viewBox="0 0 24 24"><path d="M10 20v-6h4v6h5v-8h3L12 3 2 12h3v8z" /></svg></div>
          <div class="card">
            <div class="card-head">mother<svg viewBox="0 0 24 24"><path d="M12 8l-6 6 1.410 1.410L12 10.830l4.590 4.580L18 14z" /></svg></div>
            <div class="card-row"><b>label</b>mother</div>
          </div>
        </div>
      </section>

      <aside class="right">
        <div class="acts"><button class="off">Show All<br>Data</button><button class="iso">Isolate 426<br>points</button><button>Clear<br>selection</button></div>
        <div class="hint">Search</div>
        <div class="search"><div class="field query">mother<i class="regex">.*</i></div><div class="field by">by<i class="arrow"></i></div></div>
        <div class="neigh"><span>neighbors</span><svg class="q" viewBox="2 2 20 20"><path :d="HELP_FILLED" /></svg><div class="slider"><i></i></div><div class="num">425</div></div>
        <div class="dist"><span>distance</span><a class="on">COSINE</a><a>EUCLIDEAN</a></div>
        <div class="near">Nearest points in the original space:</div>
        <div class="list">
          <div v-for="n in neighbors" :key="n[0]" class="row">
            <div class="vals"><span>{{ n[0] }}</span><em>{{ n[1] }}</em></div>
            <div class="bar"><i :style="{ width: (100 - Number(n[1]) * 100) + '%' }"></i></div>
            <div class="ticks"><u></u><u></u><u></u></div>
          </div>
        </div>
        <div class="marks"><span>BOOKMARKS (0)</span><svg class="q" viewBox="2 2 20 20"><path :d="HELP_FILLED" /></svg>
          <svg class="up" viewBox="0 0 24 24"><path d="M12 8l-6 6 1.410 1.410L12 10.830l4.590 4.580L18 14z" /></svg>
          <div class="ghost">Windows Ink Workspace</div>
        </div>
      </aside>
    </main>

    <footer class="taskbar">
      <div class="sys"><svg viewBox="0 0 16 16"><path d="M0 2.300l7-1v6.300H0zM7.700 1.200L16 0v7.600H7.700zM0 8.300h7v6.400l-7-1zM7.700 8.300H16V16l-8.300-1.200z" fill="#fff" /></svg></div>
      <div class="sys"><svg viewBox="0 0 16 16"><circle cx="10" cy="5.700" r="5" class="ln" /><path d="M6.500 9.500L.5 15.500" class="ln" /></svg></div>
      <div class="sys"><svg viewBox="0 0 16 16"><path d="M.5 0v3h10V0M.5 16v-3h10v3M.5 5.500h10v5H.5zM14 0v3.500M14 8v8" class="ln" /><path d="M12.800 4.500h2.700v2.700h-2.700z" fill="#fff" /></svg></div>
      <div class="pins">
        <div v-for="a in apps" :key="a.id" class="pin" :class="{ open: a.open, now: a.active }"><svg viewBox="0 0 24 24" v-html="a.svg"></svg></div>
      </div>
      <div class="tray">
        <svg class="t1" viewBox="0 0 12 12"><path d="M1 8.500l5-5 5 5" class="ln" /></svg>
        <svg class="t2" viewBox="0 0 18 16"><path d="M.7 5.500h3L7 2.300v11.400L3.700 10.500h-3zM9.500 6q1.400 2 0 4M11.800 4q2.800 4 0 8M14.200 2q4.200 6 0 12" class="ln" /></svg>
        <svg class="t3" viewBox="0 0 14 14"><path d="M1.500 13Q1.500 2 13 1.500M4.500 13.500Q4.500 5 13 4.800M7.500 13.500Q7.500 8.200 13 8" class="ln" /><circle cx="11.500" cy="12" r="1.500" fill="#fff" /></svg>
        <div class="ink"><svg viewBox="0 0 18 16"><path d="M7.500 6.500Q1 6 1 10.500t6 2.500L14 3q-1-3-3-1L6 11l-.5 3.500M14 3l2.500 1-5 6.500M9.500 12q0 3 2 2.500 3-1 1.500-3.500 1.500 2 4-.5" class="ln" /></svg></div>
        <svg class="t4" viewBox="0 0 23 13"><rect x=".6" y=".6" width="21.800" height="11.800" class="ln" /><path d="M3 3.700h17M3 6.400h17" stroke="#fff" stroke-width="1.300" stroke-dasharray="1.500 1.300" /><path d="M5.500 9.400h12" class="ln" /></svg>
        <span class="eng">ENG</span>
        <div class="clock"><span>6:09</span><span>24/01/2023</span></div>
        <svg class="t5" viewBox="0 0 16 16"><path d="M0 .5h15.500v12H9L6 15.500v-3H0z" fill="#fff" /><path d="M2.500 3.500h11M2.500 6h11M2.500 8.500h6" stroke="#222" stroke-width="1" /><path d="M10.500 12q0-4 4-5-.5 5-4 5z" fill="#ddd" stroke="#222" /></svg>
        <i class="peek"></i>
      </div>
    </footer>
  </div>
</template>

<style>
body { margin: 0; overflow: hidden; }
</style>

<style scoped>
* { box-sizing: border-box; }
.screen { width: 1920px; height: 1080px; display: flex; flex-direction: column; font-family: Roboto, "Liberation Sans", sans-serif; overflow: hidden; background: #fff; white-space: nowrap; }
i, em { font-style: normal; }
svg { display: block; flex: none; }

.tabstrip { height: 34px; background: #20002b; display: flex; align-items: center; font-family: "Open Sans", sans-serif; font-size: 12px; color: #c3b8cb; padding-left: 8px; }
.tab { width: 239px; height: 34px; display: flex; align-items: center; padding-left: 12px; }
.tab:first-child { border-right: 1px solid #4a3557; border-image: linear-gradient(transparent 25%, #5a4866 25%, #5a4866 75%, transparent 75%) 1; }
.fav { width: 16px; height: 16px; }
.tab-title { width: 176px; margin-left: 8px; letter-spacing: -0.34px; -webkit-mask-image: linear-gradient(90deg, #000 152px, transparent 180px); mask-image: linear-gradient(90deg, #000 152px, transparent 180px); }
.tab-x { width: 8px; height: 8px; margin-left: 8px; }
.tab-x path, .plus path { stroke: #d8cede; stroke-width: 1.5; fill: none; }
.tab.active { background: #3723a8; color: #fff; border-radius: 8px 8px 0 0; padding-left: 12px; }
.tab.active .tab-x path { stroke: #fff; }
.plus { width: 13px; height: 13px; margin-left: 16px; }
.win { margin-left: auto; display: flex; gap: 35px; padding: 0 18px 6px 0; }
.win svg { width: 11px; height: 11px; }
.win path { stroke: #81708c; stroke-width: 1; fill: none; }

.toolbar { height: 36px; background: #3723a8; display: flex; align-items: center; padding-left: 14px; }
.nav { width: 16px; height: 16px; margin-right: 16px; }
.nav path { fill: none; stroke: #fff; stroke-width: 1.9; }
.nav .solid { fill: #fff; stroke: none; }
.nav.dim path { stroke: #8a7fd0; }
.omnibox { width: 1319px; height: 28px; margin: 0 7px 0 -1px; background: #2b2161; border-radius: 14px; display: flex; align-items: center; color: #fff; font-family: "Open Sans", sans-serif; font-size: 13px; flex: none; }
.lock { width: 9px; height: 13px; margin: 0 11px 2px 13px; }
.share { width: 16px; height: 15px; margin-left: auto; }
.share path { fill: none; stroke: #b9b4dc; stroke-width: 1.3; }
.star { width: 15px; height: 15px; margin: 0 9px 0 16px; }
.star path { fill: #8ab4f8; }
.exts { display: flex; }
.ext { width: 32px; height: 28px; position: relative; display: flex; align-items: center; justify-content: center; flex: none; }
.ext svg { width: 16px; height: 16px; }
.badge { position: absolute; left: 6px; top: 16px; width: 20px; height: 12px; border-radius: 2px; background: #a50f16; color: #fff; font: 600 10px/12px "Open Sans", sans-serif; text-align: center; }
.ext .avatar { width: 22px; height: 22px; }

.bookmarks { height: 33px; background: #3723a8; border-bottom: 1px solid #6454b4; display: flex; align-items: center; color: #fff; font-family: "Open Sans", sans-serif; font-size: 12px; letter-spacing: -0.36px; padding: 0 11px 5px 15px; }
.bm { display: flex; align-items: center; flex: none; }
.bm.first { width: 99px; }
.crest { width: 14px; height: 14px; margin-right: 9px; }
.folder { width: 12px; height: 14px; background: #ffe391; border-right: 2px solid #f0c95c; border-bottom: 1px solid #f0c95c; margin-right: 10px; border-radius: 1px; }
.bm.other { margin-left: auto; padding-left: 12px; border-left: 1px solid #5546b5; height: 16px; }

.appbar { height: 60px; background: #55062f; display: flex; align-items: center; padding: 0 32px 0 24px; }
.appbar h1 { font-size: 16px; font-weight: 400; color: #fff; margin: 0 auto 0 0; }
.appbar svg { width: 24px; height: 24px; fill: #fff; margin-left: 16px; }

.body { height: 877px; display: flex; }
.left { width: 313px; border-right: 1px solid #dcdcdc; background: #fafafa; display: flex; flex-direction: column; }
.data-head { margin: 0; height: 61px; border-bottom: 1px solid #ddd; padding-left: 20px; font-size: 14px; font-weight: 500; line-height: 61px; }
.data { flex: 1; padding: 15px 20px 0; }
.hint { font-size: 12px; line-height: 18px; color: #757575; }
.field { position: relative; height: 22px; border-bottom: 1px solid #6c6c6c; display: flex; align-items: center; justify-content: space-between; font-size: 14px; line-height: 20px; color: #212121; padding-bottom: 3px; }
.wide { font-size: 15px; }
.arrow { border: 5px solid transparent; border-top-color: #999; border-bottom: 0; margin: 2px 7px 0 0; }
.pair { display: flex; gap: 10px; margin-top: 32px; }
.pair .field { color: #757575; font-size: 14px; padding-bottom: 4px; }
.edit { width: 100px; }
.tag { flex: 1; }
.buttons { display: flex; gap: 5px; margin-top: 14px; height: 35px; align-items: center; font-size: 13.3px; color: #aaa; }
.buttons button, .acts button { border: 0; background: #e2e2e2; font: 13.2px Roboto, sans-serif; padding: 0; color: #111; }
.buttons button { height: 35px; border-radius: 2px; width: 54px; }
.buttons button:nth-child(2) { width: 66px; }
.buttons button:nth-child(3) { width: 82px; }
.buttons span { margin-left: 12px; }
.sphere { display: flex; align-items: center; height: 18px; margin-top: 10px; font-size: 14px; color: #212121; }
.check { width: 18px; height: 18px; border-radius: 2px; background: #880e4f; flex: none; }
.check path { fill: none; stroke: #fff; stroke-width: 2; }
.sphere span { margin: 0 7px 0 8px; }
.q { width: 13px; height: 13px; fill: #111; }
.sphere .q { margin-bottom: 3px; }
.file { display: flex; padding-left: 3px; font-size: 12.1px; line-height: 16px; color: #555; margin-top: 12px; }
.file + .file { margin-top: 11px; }
.file span { width: 67px; flex: none; }
.methods { height: 52px; border-top: 1px solid #ddd; border-bottom: 1px solid #ddd; display: flex; font-size: 14px; font-weight: 300; line-height: 51px; color: #777; }
.m1 { width: 77px; padding-left: 19px; }
.m2 { width: 82px; padding-left: 19px; }
.m3 { width: 51px; height: 51px; border-bottom: 2px solid #000; text-align: center; color: #000; font-weight: 500; line-height: 50px; }
.m4 { padding-left: 27px; }
.pca { display: flex; flex-wrap: wrap; padding: 28px 20px 0; column-gap: 15px; align-items: center; }
.comp { width: 129px; height: 60px; }
.comp.y { width: 128px; }
.comp small { display: block; font-size: 12px; line-height: 20px; color: #757575; height: 23px; }
.comp .field { height: 22px; padding-bottom: 4px; }
.pca .check { margin: -4px 0 0 5px; }
.approx { display: flex; align-items: center; padding-left: 20px; margin-top: 4px; height: 20px; font-size: 14px; color: #760c45; }
.approx .q { fill: #880e4f; margin: 0 0 2px 8px; }
.variance { padding-left: 20px; margin: 11px 0 19px; line-height: 20px; font-size: 14px; color: #555; }

.stage { width: 1306px; display: flex; flex-direction: column; background: #fff; }
.stage-bar { height: 61px; border-bottom: 1px solid #e6e6e6; display: flex; align-items: center; padding-left: 32px; gap: 16px; }
.stage-bar svg { width: 24px; height: 24px; }
.stat { height: 16px; line-height: 16px; border-left: 1px solid #444; padding-left: 5px; font-size: 14px; color: #222; margin-left: -16px; }
.s1 { margin-left: -3px; width: 81px; }
.s2 { width: 100px; }
.plot { position: relative; height: 816px; }
.dot { mix-blend-mode: multiply; }
.cloud { isolation: isolate; }
.lbl { font: 9.8px Roboto, sans-serif; paint-order: stroke; stroke: rgba(255, 255, 255, 0.72); stroke-width: 3px; stroke-linejoin: round; }
.lbl.big { font-size: 20px; }
.plot-help { position: absolute; left: 28px; top: 28px; width: 24px; height: 24px; }
.home { position: absolute; left: 1254px; top: -21px; width: 40px; height: 40px; border-radius: 50%; background: #fff; box-shadow: 0 1px 4px rgba(0, 0, 0, 0.3); display: flex; align-items: center; justify-content: center; }
.home svg { width: 21px; height: 21px; }
.card { position: absolute; left: 1031px; top: 25px; width: 270px; height: 76px; background: #fff; box-shadow: 0 1px 3px rgba(0, 0, 0, 0.5); }
.card-head { height: 44px; background: #e8e8e8; display: flex; align-items: center; justify-content: space-between; padding: 1px 8px 0 12px; font-size: 14.2px; color: #222; }
.card-head svg { width: 24px; height: 24px; }
.card-row { line-height: 36px; padding-left: 15px; font-size: 12px; color: #222; }
.card-row b { font-weight: 700; margin-right: 6px; }

.right { width: 301px; background: #fafafa; border-left: 1px solid #dcdcdc; padding: 10px 20px 0 20px; display: flex; flex-direction: column; }
.acts { display: flex; gap: 10px; }
.acts button { height: 60px; width: 74px; border-radius: 7px; line-height: 15px; }
.acts button.iso { width: 88px; }
.acts button:last-child { width: 78px; }
.acts button.off { color: #a8a8a8; }
.right .hint { margin-top: 9px; }
.search { display: flex; gap: 10px; margin-top: 2px; }
.search .field { height: 24px; font-size: 14.2px; }
.query { width: 181px; }
.field .regex { width: 17px; height: 21px; background: #e0e0e0; border-radius: 2px; font-size: 13px; text-align: center; margin-bottom: -3px; }
.search .by { width: 69px; color: #666; }
.neigh { display: flex; align-items: center; height: 26px; margin-top: 28px; font-size: 14.2px; color: #666; }
.neigh .q { margin: 0 15px 3px 5px; fill: #000; }
.slider { width: 110px; height: 2px; background: linear-gradient(90deg, #3367d6 42%, #bdbdbd 42%); position: relative; }
.slider i { position: absolute; left: 40px; top: -5px; width: 12px; height: 12px; border-radius: 50%; background: #3367d6; }
.num { width: 39px; height: 26px; margin-left: auto; border-bottom: 1px solid #6c6c6c; font-size: 16px; line-height: 24px; color: #333; -webkit-mask: linear-gradient(#000, #000) 0 100% / 100% 1px no-repeat, linear-gradient(#000, #000) 0 0 / 24.5px 100% no-repeat; }
.dist { display: flex; align-items: center; height: 20px; margin-top: 23px; font-size: 14.2px; color: #666; }
.dist span { width: 121px; flex: none; }
.dist a { font-size: 13px; margin-right: 15px; }
.dist a:last-child { margin-right: 0; }
.dist .on { color: #1e88d8; }
.near { margin-top: 40px; height: 22px; line-height: 22px; font-size: 14px; color: #111; }
.list { margin-top: 10px; height: 526px; overflow: hidden; }
.row { height: 25px; }
.vals { display: flex; justify-content: space-between; height: 19px; font-size: 12.1px; line-height: 18px; color: #7b2d86; }
.vals em { font-weight: 300; color: #666; }
.bar { height: 1px; background: #ccc; }
.bar i { display: block; height: 1px; background: #6f2179; }
.ticks { display: flex; height: 3px; }
.ticks u { width: 65px; border-right: 1px solid #c9c9c9; }
.marks { position: relative; margin: 0 -20px; height: 62px; border-top: 1px solid #ddd; display: flex; align-items: center; padding: 0 8px 2px 24px; font-size: 14px; font-weight: 500; color: #111; flex: none; }
.marks .q { margin-left: 7px; }
.marks .up { width: 24px; height: 24px; margin-left: auto; }
.ghost { position: absolute; left: 22px; top: 41px; width: 142px; height: 19px; border: 1px solid #eee; font: 12px/17px "Open Sans", sans-serif; letter-spacing: -0.1px; color: #ededed; padding-left: 5px; }

.taskbar { height: 40px; background: #202020; display: flex; color: #fff; font-family: "Open Sans", sans-serif; }
.sys { width: 48px; display: flex; align-items: center; justify-content: center; }
.sys svg { width: 16px; height: 16px; }
.ln { fill: none; stroke: #fff; stroke-width: 1.2; }
.pins { display: flex; padding-left: 2px; }
.pin { width: 49px; height: 40px; display: flex; align-items: center; justify-content: center; position: relative; }
.pin svg { width: 24px; height: 24px; overflow: visible; z-index: 1; }
.pin.open::after { content: ""; position: absolute; left: 5px; right: 4px; bottom: 0; height: 2px; background: #76b9ed; }
.pin.now::before { content: ""; position: absolute; left: 3px; right: 2px; top: 13px; bottom: 0; background: #505050; }
.pin.now::after { left: 3px; right: 2px; }
.tray { margin-left: auto; display: flex; align-items: center; }
.t1 { width: 13px; height: 13px; margin-right: 9px; }
.t2 { width: 18px; height: 16px; margin-right: 9px; }
.t3 { width: 14px; height: 14px; margin-right: 4px; }
.ink { width: 32px; height: 40px; background: #343434; display: flex; align-items: center; justify-content: center; margin-right: 4px; }
.ink svg { width: 17px; height: 16px; }
.t4 { width: 23px; height: 13px; margin-right: 10px; }
.eng { font-size: 12px; width: 24px; letter-spacing: -0.3px; }
.clock { width: 62px; margin-left: 11px; text-align: center; font-size: 12px; line-height: 18px; display: flex; flex-direction: column; align-items: center; letter-spacing: -0.45px; }
.t5 { width: 16px; height: 16px; margin: 0 20px 0 16px; }
.peek { width: 5px; height: 40px; border-left: 1px solid #6a6a6a; }
</style>
